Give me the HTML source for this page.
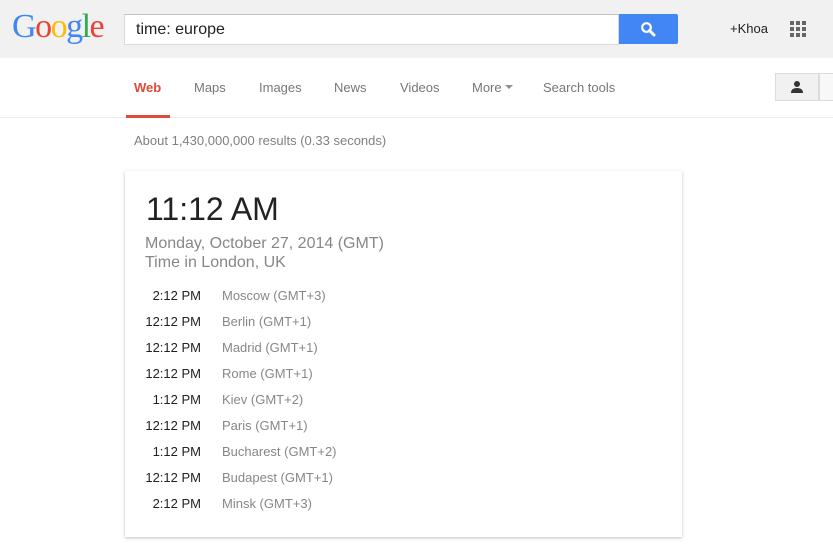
<!DOCTYPE html>
<html><head><style>
body{margin:0;width:833px;height:547px;background:#fff;font-family:"Liberation Sans",Arial,sans-serif;position:relative;overflow:hidden}
div{white-space:nowrap}
.hdr{position:absolute;left:0;top:0;width:833px;height:58px;background:#f1f1f1}
.logo{position:absolute;left:12px;top:8px;font-family:"Liberation Serif",serif;font-size:34px;letter-spacing:-1.5px}
.box{position:absolute;left:124px;top:14px;border:1px solid #d9d9d9;border-top-color:#c0c0c0;background:#fff;font-size:16px;line-height:29px;padding-left:11px;box-sizing:border-box;width:495px;height:31px;color:#222}
.btn{position:absolute;left:619px;top:14px;width:59px;height:30px;background:#4285f4;border-radius:0 2px 2px 0}
.nav{position:absolute;top:80px;font-size:13px;color:#777}
.a{position:absolute;font-size:13px}
.card{position:absolute;left:125px;top:171px;width:557px;height:366px;background:#fff;box-shadow:0 1px 3px rgba(0,0,0,.25)}
.row{position:absolute;font-size:13px;height:16px}
.t{position:absolute;right:0;width:60px;text-align:right;color:#222}
</style></head><body>
<div class="hdr">
<div class="logo"><span style="color:#4285f4">G</span><span style="color:#ea4335">o</span><span style="color:#fbbc05">o</span><span style="color:#4285f4">g</span><span style="color:#34a853">l</span><span style="color:#ea4335">e</span></div>
<div class="box">time: europe</div>
<div class="btn"><svg width="59" height="30"><circle cx="27.5" cy="13.5" r="4.3" stroke="#fff" stroke-width="2.2" fill="none"/><path d="M30.5 16.5 L35 21" stroke="#fff" stroke-width="3" stroke-linecap="round"/></svg></div>
<div class="a" style="left:730px;top:21px;color:#222">+Khoa</div>
<svg style="position:absolute;left:790px;top:21px" width="16" height="16" fill="#666"><rect x="0" y="0" width="4" height="4"/><rect x="6" y="0" width="4" height="4"/><rect x="12" y="0" width="4" height="4"/><rect x="0" y="6" width="4" height="4"/><rect x="6" y="6" width="4" height="4"/><rect x="12" y="6" width="4" height="4"/><rect x="0" y="12" width="4" height="4"/><rect x="6" y="12" width="4" height="4"/><rect x="12" y="12" width="4" height="4"/></svg>
</div>
<div style="position:absolute;left:0;top:117px;width:833px;height:1px;background:#ebebeb"></div>
<div class="nav" style="left:134px;color:#dd4b39;font-weight:bold">Web</div>
<div style="position:absolute;left:126px;top:115px;width:44px;height:3px;background:#dd4b39"></div>
<div class="nav" style="left:194px">Maps</div>
<div class="nav" style="left:259px">Images</div>
<div class="nav" style="left:334px">News</div>
<div class="nav" style="left:400px">Videos</div>
<div class="nav" style="left:472px">More <span style="display:inline-block;border:4px solid transparent;border-top-color:#909090;vertical-align:-1px"></span></div>
<div class="nav" style="left:543px">Search tools</div>
<div style="position:absolute;left:775px;top:73px;width:44px;height:28px;background:#f1f1f1;border:1px solid #dcdcdc;box-sizing:border-box"></div>
<div style="position:absolute;left:819px;top:73px;width:20px;height:28px;background:#f8f8f8;border:1px solid #dcdcdc;box-sizing:border-box"></div>
<svg style="position:absolute;left:790px;top:80px" width="14" height="14" fill="#333"><circle cx="7" cy="4" r="3"/><path d="M1 13 Q1 8 7 8 Q13 8 13 13Z"/></svg>
<div class="a" style="left:134px;top:133px;color:#808080">About 1,430,000,000 results (0.33 seconds)</div>
<div class="card">
<div style="position:absolute;left:21px;top:20px;font-size:32px;color:#222">11:12 AM</div>
<div style="position:absolute;left:20px;top:63px;font-size:16px;color:#878787;line-height:19px">Monday, October 27, 2014 (GMT)<br>Time in London, UK</div>
</div>
<div style="position:absolute;left:0;top:0">
<div class="row" style="left:141px;top:288px;width:60px"><span class="t">2:12 PM</span></div><div class="a" style="left:222px;top:288px;color:#878787">Moscow (GMT+3)</div>
<div class="row" style="left:141px;top:314px;width:60px"><span class="t">12:12 PM</span></div><div class="a" style="left:222px;top:314px;color:#878787">Berlin (GMT+1)</div>
<div class="row" style="left:141px;top:340px;width:60px"><span class="t">12:12 PM</span></div><div class="a" style="left:222px;top:340px;color:#878787">Madrid (GMT+1)</div>
<div class="row" style="left:141px;top:366px;width:60px"><span class="t">12:12 PM</span></div><div class="a" style="left:222px;top:366px;color:#878787">Rome (GMT+1)</div>
<div class="row" style="left:141px;top:392px;width:60px"><span class="t">1:12 PM</span></div><div class="a" style="left:222px;top:392px;color:#878787">Kiev (GMT+2)</div>
<div class="row" style="left:141px;top:418px;width:60px"><span class="t">12:12 PM</span></div><div class="a" style="left:222px;top:418px;color:#878787">Paris (GMT+1)</div>
<div class="row" style="left:141px;top:444px;width:60px"><span class="t">1:12 PM</span></div><div class="a" style="left:222px;top:444px;color:#878787">Bucharest (GMT+2)</div>
<div class="row" style="left:141px;top:470px;width:60px"><span class="t">12:12 PM</span></div><div class="a" style="left:222px;top:470px;color:#878787">Budapest (GMT+1)</div>
<div class="row" style="left:141px;top:496px;width:60px"><span class="t">2:12 PM</span></div><div class="a" style="left:222px;top:496px;color:#878787">Minsk (GMT+3)</div>
</div>
</body></html>
